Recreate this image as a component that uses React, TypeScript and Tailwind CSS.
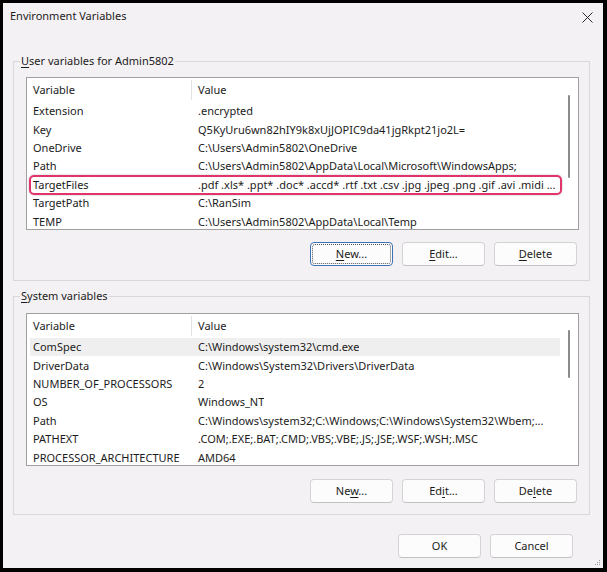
import React from "react";

type Item = { name: string; value: string; sel?: boolean; mark?: boolean };

const userVars: Item[] = [
  { name: "Extension", value: ".encrypted" },
  { name: "Key", value: "Q5KyUru6wn82hIY9k8xUjJOPIC9da41jgRkpt21jo2L=" },
  { name: "OneDrive", value: "C:\\Users\\Admin5802\\OneDrive" },
  { name: "Path", value: "C:\\Users\\Admin5802\\AppData\\Local\\Microsoft\\WindowsApps;" },
  {
    name: "TargetFiles",
    value: ".pdf .xls* .ppt* .doc* .accd* .rtf .txt .csv .jpg .jpeg .png .gif .avi .midi ...",
    mark: true,
  },
  { name: "TargetPath", value: "C:\\RanSim" },
  { name: "TEMP", value: "C:\\Users\\Admin5802\\AppData\\Local\\Temp" },
];

const sysVars: Item[] = [
  { name: "ComSpec", value: "C:\\Windows\\system32\\cmd.exe", sel: true },
  { name: "DriverData", value: "C:\\Windows\\System32\\Drivers\\DriverData" },
  { name: "NUMBER_OF_PROCESSORS", value: "2" },
  { name: "OS", value: "Windows_NT" },
  { name: "Path", value: "C:\\Windows\\system32;C:\\Windows;C:\\Windows\\System32\\Wbem;..." },
  { name: "PATHEXT", value: ".COM;.EXE;.BAT;.CMD;.VBS;.VBE;.JS;.JSE;.WSF;.WSH;.MSC" },
  { name: "PROCESSOR_ARCHITECTURE", value: "AMD64" },
];

function Row({ item }: { item: Item }) {
  return (
    <div className="relative flex h-[18.4px] shrink-0 items-center">
      {item.sel && <div className="absolute left-[3px] right-[18px] inset-y-0 bg-[#f0eff0]" />}
      <div className="relative w-[165px] shrink-0 overflow-hidden whitespace-nowrap pl-[6px]">{item.name}</div>
      <div className="relative overflow-hidden whitespace-nowrap pl-[6px]">{item.value}</div>
      {item.mark && (
        <div className="absolute left-[2px] right-[16px] top-[-1px] bottom-[-1px] rounded-[5px] border-2 border-[#e3336b] shadow-[0_0_2px_rgba(0,0,0,0.3)]" />
      )}
    </div>
  );
}

function ListBox({ items, thumbTop, thumbH }: { items: Item[]; thumbTop: string; thumbH: string }) {
  return (
    <div className="relative h-[153px] w-full overflow-hidden border border-[#a0a0a0] bg-white">
      <div className="flex h-[24px] items-center">
        <div className="w-[164px] shrink-0 pl-[6px]">Variable</div>
        <div className="h-[20px] w-px bg-[#e3e3e3]" />
        <div className="pl-[6px]">Value</div>
      </div>
      <div className="flex flex-col">
        {items.map((it, i) => (
          <Row key={i} item={it} />
        ))}
      </div>
      <div className={`absolute right-[8px] w-[2px] rounded-full bg-[#8a8a8a] ${thumbTop} ${thumbH}`} />
    </div>
  );
}

function Btn({ children, focus }: { children: React.ReactNode; focus?: boolean }) {
  return (
    <div
      className={`relative flex h-[24px] w-[83px] items-center justify-center rounded-[4px] border bg-[#fdfcfd] ${
        focus ? "border-[#3f72b5]" : "border-[#d6d3d6] border-b-[#c4c1c4]"
      }`}
    >
      {focus && <div className="absolute inset-[1px] rounded-[3px] border border-dotted border-[#555]" />}
      <span className="relative">{children}</span>
    </div>
  );
}

function U({ children }: { children: React.ReactNode }) {
  return <span className="underline underline-offset-2">{children}</span>;
}

export default function App() {
  return (
    <div className="h-[572px] w-[607px] bg-black pb-[4px] pl-[3px] pr-[4px] pt-[3px]">
      <div className="relative flex h-full w-full flex-col bg-[#f4f1f4] font-['Noto_Sans','Segoe_UI',sans-serif] text-[11px] leading-[16px] text-[#1b1b1b]">
        {/* title bar */}
        <div className="flex h-[26px] shrink-0 items-center justify-between pl-[7px] pr-[10px]">
          <span>Environment Variables</span>
          <svg width="11" height="11" viewBox="0 0 11 11" className="mt-[2px]">
            <path d="M0.5 0.5 L10.5 10.5 M10.5 0.5 L0.5 10.5" stroke="#2a2a2a" strokeWidth="1" fill="none" />
          </svg>
        </div>

        <div className="mt-[24px] flex flex-col pl-[10px] pr-[13px]">
          {/* user group */}
          <fieldset className="border border-[#dad7da]">
            <legend className="ml-[6px] px-[1px]">
              <U>U</U>ser variables for Admin5802
            </legend>
            <div className="flex flex-col pb-[14px] pl-[12px] pr-[10px] pt-[8px]">
              <ListBox items={userVars} thumbTop="top-[17px]" thumbH="h-[83px]" />
              <div className="mt-[12px] flex justify-end gap-[9px] pr-[2px]">
                <Btn focus>
                  <U>N</U>ew...
                </Btn>
                <Btn>
                  <U>E</U>dit...
                </Btn>
                <Btn>
                  <U>D</U>elete
                </Btn>
              </div>
            </div>
          </fieldset>

          {/* system group */}
          <fieldset className="mt-[7px] border border-[#dad7da]">
            <legend className="ml-[6px] px-[1px]">
              <U>S</U>ystem variables
            </legend>
            <div className="flex flex-col pb-[11px] pl-[12px] pr-[10px] pt-[9px]">
              <ListBox items={sysVars} thumbTop="top-[16px]" thumbH="h-[48px]" />
              <div className="mt-[13px] flex justify-end gap-[9px] pr-[2px]">
                <Btn>
                  Ne<U>w</U>...
                </Btn>
                <Btn>
                  Ed<U>i</U>t...
                </Btn>
                <Btn>
                  De<U>l</U>ete
                </Btn>
              </div>
            </div>
          </fieldset>
        </div>

        <div className="mt-[19px] flex justify-end gap-[9px] pr-[30px]">
          <Btn>OK</Btn>
          <Btn>Cancel</Btn>
        </div>

        <svg width="6" height="6" viewBox="0 0 6 6" className="absolute bottom-[2px] right-[2px]">
          <rect x="4" y="0" width="1" height="1" fill="#9a9a9a" />
          <rect x="2" y="2" width="1" height="1" fill="#9a9a9a" />
          <rect x="4" y="2" width="1" height="1" fill="#9a9a9a" />
          <rect x="0" y="4" width="1" height="1" fill="#9a9a9a" />
          <rect x="2" y="4" width="1" height="1" fill="#9a9a9a" />
          <rect x="4" y="4" width="1" height="1" fill="#9a9a9a" />
        </svg>
      </div>
    </div>
  );
}
